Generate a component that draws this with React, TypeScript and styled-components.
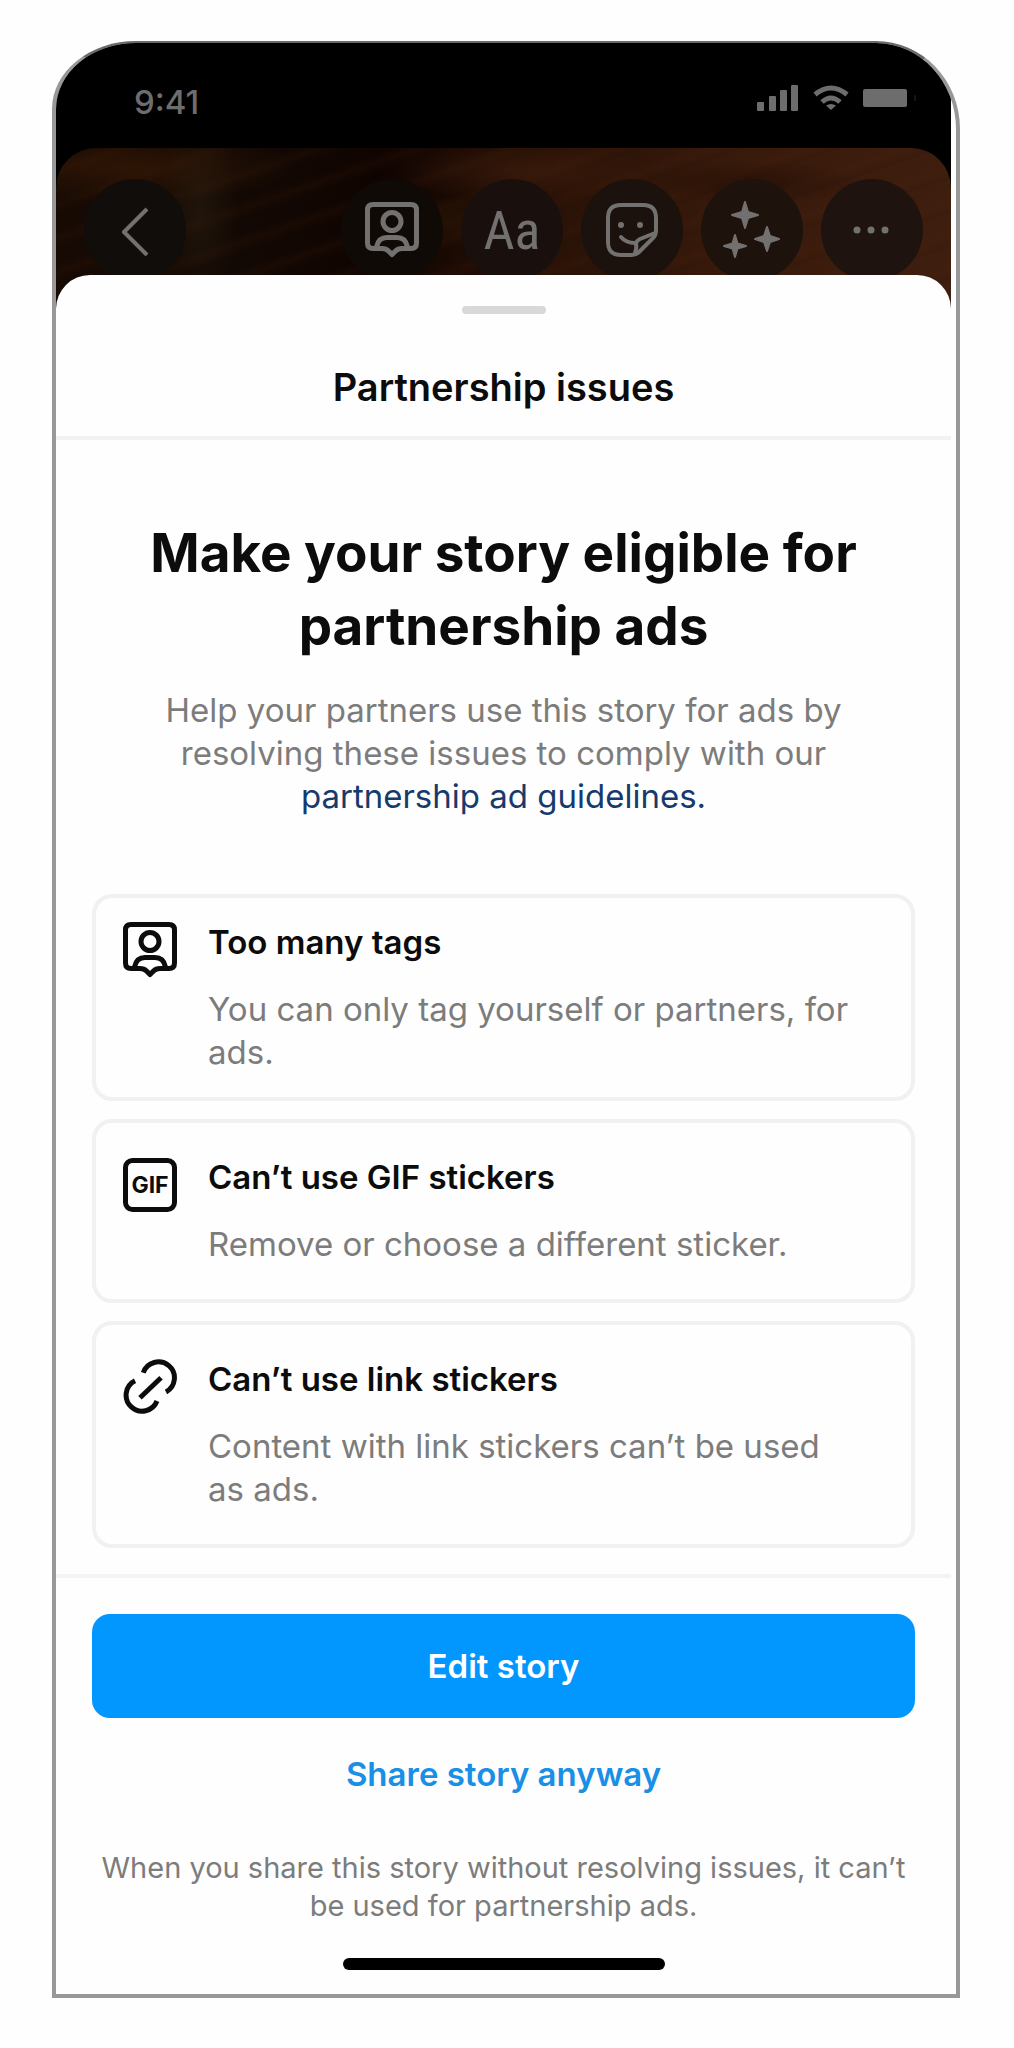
import React from "react";
import styled, { createGlobalStyle } from "styled-components";

const GlobalStyle = createGlobalStyle`
  * { box-sizing: border-box; }
  body { margin: 0; background: #fefefe; font-family: Inter, "Liberation Sans", sans-serif; color: #0c0c0d; }
  h1, h2, h3, p, ul { margin: 0; padding: 0; }
  button { font: inherit; border: 0; padding: 0; cursor: pointer; }
  svg { display: block; flex: none; }
`;

const Page = styled.div`
  padding: 41px 54px 48px 52px;
`;

const Phone = styled.main`
  display: flex;
  flex-direction: column;
  border: 4px solid #989898;
  border-top: 2px solid #6a6a6a;
  border-radius: 84px 84px 0 0 / 68px 88px 0 0;
  padding-right: 5px;
  overflow: hidden;
  background: #fefefe;
`;

const Backdrop = styled.div`
  background: #000;
  color: #6d6d6d;
`;

const StatusBar = styled.header`
  display: flex;
  align-items: center;
  justify-content: space-between;
  height: 105px;
  padding: 12px 34px 0 78px;
  font-size: 33px;
  font-weight: 500;
`;

const StatusIcons = styled.div`
  display: flex;
  align-items: center;
  gap: 14px;
  padding-bottom: 8px;
`;

const Story = styled.nav`
  display: flex;
  justify-content: space-between;
  padding: 31px 28px 27px;
  border-radius: 40px 40px 0 0;
  background:
    radial-gradient(ellipse 40px 90px at 16% 40%, rgba(52, 38, 20, 0.4), transparent),
    radial-gradient(ellipse 170px 36px at 8% 12%, rgba(66, 30, 6, 0.55), transparent),
    radial-gradient(ellipse 130px 30px at 52% 14%, rgba(72, 34, 14, 0.5), transparent),
    radial-gradient(ellipse 90px 24px at 44% 46%, rgba(48, 26, 4, 0.5), transparent),
    radial-gradient(ellipse 110px 22px at 78% 22%, rgba(26, 8, 2, 0.5), transparent),
    repeating-linear-gradient(161deg, rgba(90, 40, 12, 0) 0 14px, rgba(90, 40, 12, 0.1) 22px, rgba(0, 0, 0, 0.06) 32px),
    linear-gradient(95deg, #170a03 0%, #130904 20%, #100401 36%, #281106 54%, #381a0b 75%, #3e1e0f 100%);
`;

const Tools = styled.div`
  display: flex;
  gap: 18px;
`;

const RoundButton = styled.button<{ $shade: string }>`
  display: flex;
  align-items: center;
  justify-content: center;
  width: 102px;
  height: 102px;
  border-radius: 50%;
  background: ${(p) => p.$shade};
  color: #737070;
`;

const LetterMark = styled.span`
  font-family: "Liberation Sans Narrow", "Roboto Condensed", "Open Sans Condensed", "Noto Sans", sans-serif;
  font-size: 54px;
  font-weight: 400;
`;

const Sheet = styled.section`
  display: flex;
  flex-direction: column;
  margin-top: -33px;
  border-radius: 34px 34px 0 0;
  background: #fefefe;
`;

const SheetHeader = styled.header`
  display: flex;
  flex-direction: column;
  align-items: center;
  gap: 52px;
  padding: 31px 0 27px;
  border-bottom: 4px solid #f2f2f2;
`;

const Grabber = styled.div`
  width: 84px;
  height: 8px;
  border-radius: 4px;
  background: #d8d8d8;
`;

const SheetTitle = styled.h2`
  font-size: 38px;
  line-height: 43px;
  font-weight: 600;
`;

const Intro = styled.div`
  padding: 77px 60px 0;
  text-align: center;
`;

const Headline = styled.h1`
  font-size: 53px;
  line-height: 73px;
  font-weight: 700;
`;

const Copy = styled.p`
  font-size: 33px;
  line-height: 43px;
  color: #7c7c7c;
`;

const IntroCopy = styled(Copy)`
  padding: 26px 30px 0;
`;

const InlineLink = styled.a`
  color: #173a6c;
  text-decoration: none;
`;

const IssueList = styled.ul`
  display: flex;
  flex-direction: column;
  gap: 18px;
  padding: 76px 36px 26px;
  list-style: none;
`;

const Issue = styled.li<{ $pad: number }>`
  display: flex;
  gap: 31px;
  padding: ${(p) => p.$pad}px 60px ${(p) => p.$pad}px 27px;
  border: 4px solid #f1f1f1;
  border-radius: 20px;
`;

const IssueText = styled.div`
  display: flex;
  flex-direction: column;
  gap: 24px;
`;

const IssueTitle = styled.h3`
  font-size: 33px;
  line-height: 43px;
  font-weight: 600;
`;

const Actions = styled.footer`
  display: flex;
  flex-direction: column;
  align-items: center;
  padding: 36px 36px 24px;
  border-top: 4px solid #f4f4f4;
`;

const PrimaryButton = styled.button`
  width: 100%;
  height: 104px;
  border-radius: 18px;
  background: #0296ff;
  color: #fff;
  font-size: 33px;
  font-weight: 600;
`;

const TextButton = styled.button`
  margin: 35px 0 53px;
  background: none;
  color: #1a8fe6;
  font-size: 33px;
  line-height: 43px;
  font-weight: 600;
`;

const Note = styled.p`
  font-size: 29px;
  line-height: 38px;
  text-align: center;
  color: #7c7c7c;
`;

const HomeIndicator = styled.div`
  width: 322px;
  height: 12px;
  margin-top: 33px;
  border-radius: 6px;
  background: #000;
`;

const stroke = {
  fill: "none",
  stroke: "currentColor",
  strokeLinecap: "round" as const,
  strokeLinejoin: "round" as const,
};

const TagIcon = () => (
  <svg width="54" height="58" viewBox="0 0 54 58" {...stroke} strokeWidth="5" aria-hidden="true">
    <path d="M8 3.500H46Q51.500 3.500 51.500 9V42Q51.500 47.500 46 47.500H37Q33 47.500 30.500 50L27 53.500L23.500 50Q21 47.500 17 47.500H8Q2.500 47.500 2.500 42V9Q2.500 3.500 8 3.500Z" />
    <circle cx="27" cy="20.500" r="9" />
    <path d="M11.500 46C13 38.500 18 36.500 22 36.500H32C36 36.500 41 38.500 42.500 46" />
  </svg>
);

const GifIcon = () => (
  <svg width="54" height="58" viewBox="0 0 54 58" aria-hidden="true">
    <rect x="2.500" y="4.500" width="49" height="49" rx="7" fill="none" stroke="currentColor" strokeWidth="5" />
    <text x="27" y="37" textAnchor="middle" fontFamily="Inter, sans-serif" fontSize="23" fontWeight="700" fill="currentColor">GIF</text>
  </svg>
);

const LinkIcon = () => (
  <svg width="54" height="58" viewBox="0 0 54 58" {...stroke} strokeLinecap="butt" strokeWidth="5" aria-hidden="true">
    <path d="M20.300 14.700A16 16 0 1 1 43 34" />
    <path d="M34 43A16 16 0 1 1 12 22.800" />
    <path d="M17 39.700L38 19.700" />
  </svg>
);

const BackIcon = () => (
  <svg width="30" height="52" viewBox="0 0 30 52" {...stroke} strokeLinecap="butt" strokeWidth="4" aria-hidden="true">
    <path d="M27 5L4 28L27 51" />
  </svg>
);

const StickerIcon = () => (
  <svg width="54" height="56" viewBox="0 0 54 56" {...stroke} strokeWidth="4" aria-hidden="true">
    <path d="M16 3H38Q51 3 51 16V29Q51 33 48 36L34 50Q31 53 27 53H16Q3 53 3 40V16Q3 3 16 3Z" />
    <path d="M30 51Q32 46 31 42Q31 39 35 37L50 31" />
    <path d="M16 35Q21 41 30 41" />
    <circle cx="16" cy="23" r="2" fill="currentColor" strokeWidth="2" />
    <circle cx="35" cy="23" r="2" fill="currentColor" strokeWidth="2" />
  </svg>
);

const SparkleIcon = () => (
  <svg width="58" height="58" viewBox="0 0 58 58" fill="currentColor" stroke="currentColor" strokeWidth="2" strokeLinejoin="round" aria-hidden="true">
    <path d="M22 1L25 11L35 14L25 17L22 27L19 17L9 14L19 11Z" />
    <path d="M44 26L47 35L56 38L47 41L44 50L41 41L32 38L41 35Z" />
    <path d="M12 34L14.500 42.500L23 45L14.500 47.500L12 56L9.500 47.500L1 45L9.500 42.500Z" />
  </svg>
);

const MoreIcon = () => (
  <svg width="38" height="8" viewBox="0 0 38 8" fill="currentColor" aria-hidden="true">
    <circle cx="4" cy="4" r="3.500" />
    <circle cx="18" cy="4" r="3.500" />
    <circle cx="32" cy="4" r="3.500" />
  </svg>
);

const SignalIcon = () => (
  <svg width="42" height="26" viewBox="0 0 42 26" fill="currentColor" aria-hidden="true">
    <rect x="0" y="17" width="7" height="9" rx="1" />
    <rect x="12" y="11" width="7" height="15" rx="1" />
    <rect x="23" y="5" width="7" height="21" rx="1" />
    <rect x="34" y="0" width="7" height="26" rx="1" />
  </svg>
);

const WifiIcon = () => (
  <svg width="36" height="26" viewBox="0 0 36 26" {...stroke} strokeLinecap="butt" strokeWidth="5" aria-hidden="true">
    <path d="M2 9.500Q18 -3.500 34 9.500" />
    <path d="M9 17Q18 9 27 17" />
    <path d="M18 25L13 20.500Q18 17.500 23 20.500Z" fill="currentColor" stroke="none" />
  </svg>
);

const BatteryIcon = () => (
  <svg width="54" height="20" viewBox="0 0 54 20" fill="currentColor" aria-hidden="true">
    <rect x="0" y="1" width="44" height="18" rx="2" />
    <rect x="51" y="7" width="2" height="6" rx="1" opacity="0.2" />
  </svg>
);

const issues = [
  { icon: <TagIcon />, title: "Too many tags", text: "You can only tag yourself or partners, for ads.", pad: 23 },
  { icon: <GifIcon />, title: "Can’t use GIF stickers", text: "Remove or choose a different sticker.", pad: 33 },
  { icon: <LinkIcon />, title: "Can’t use link stickers", text: "Content with link stickers can’t be used as ads.", pad: 33 },
];

export default function App() {
  return (
    <>
      <GlobalStyle />
      <Page>
        <Phone>
          <Backdrop>
            <StatusBar>
              <span>9:41</span>
              <StatusIcons>
                <SignalIcon />
                <WifiIcon />
                <BatteryIcon />
              </StatusIcons>
            </StatusBar>
            <Story aria-label="Story tools">
              <RoundButton $shade="#110d0b" aria-label="Back"><BackIcon /></RoundButton>
              <Tools>
                <RoundButton $shade="#100a06" aria-label="Tag people"><TagIcon /></RoundButton>
                <RoundButton $shade="#19100d" aria-label="Add text"><LetterMark>Aa</LetterMark></RoundButton>
                <RoundButton $shade="#1b110d" aria-label="Stickers"><StickerIcon /></RoundButton>
                <RoundButton $shade="#1d120c" aria-label="Effects"><SparkleIcon /></RoundButton>
                <RoundButton $shade="#1e130f" aria-label="More"><MoreIcon /></RoundButton>
              </Tools>
            </Story>
          </Backdrop>
          <Sheet>
            <SheetHeader>
              <Grabber />
              <SheetTitle>Partnership issues</SheetTitle>
            </SheetHeader>
            <Intro>
              <Headline>Make your story eligible for partnership ads</Headline>
              <IntroCopy>
                Help your partners use this story for ads by resolving these issues to comply with our{" "}
                <InlineLink href="#guidelines">partnership ad guidelines.</InlineLink>
              </IntroCopy>
            </Intro>
            <IssueList>
              {issues.map((issue) => (
                <Issue key={issue.title} $pad={issue.pad}>
                  {issue.icon}
                  <IssueText>
                    <IssueTitle>{issue.title}</IssueTitle>
                    <Copy>{issue.text}</Copy>
                  </IssueText>
                </Issue>
              ))}
            </IssueList>
            <Actions>
              <PrimaryButton>Edit story</PrimaryButton>
              <TextButton>Share story anyway</TextButton>
              <Note>When you share this story without resolving issues, it can’t be used for partnership ads.</Note>
              <HomeIndicator />
            </Actions>
          </Sheet>
        </Phone>
      </Page>
    </>
  );
}
